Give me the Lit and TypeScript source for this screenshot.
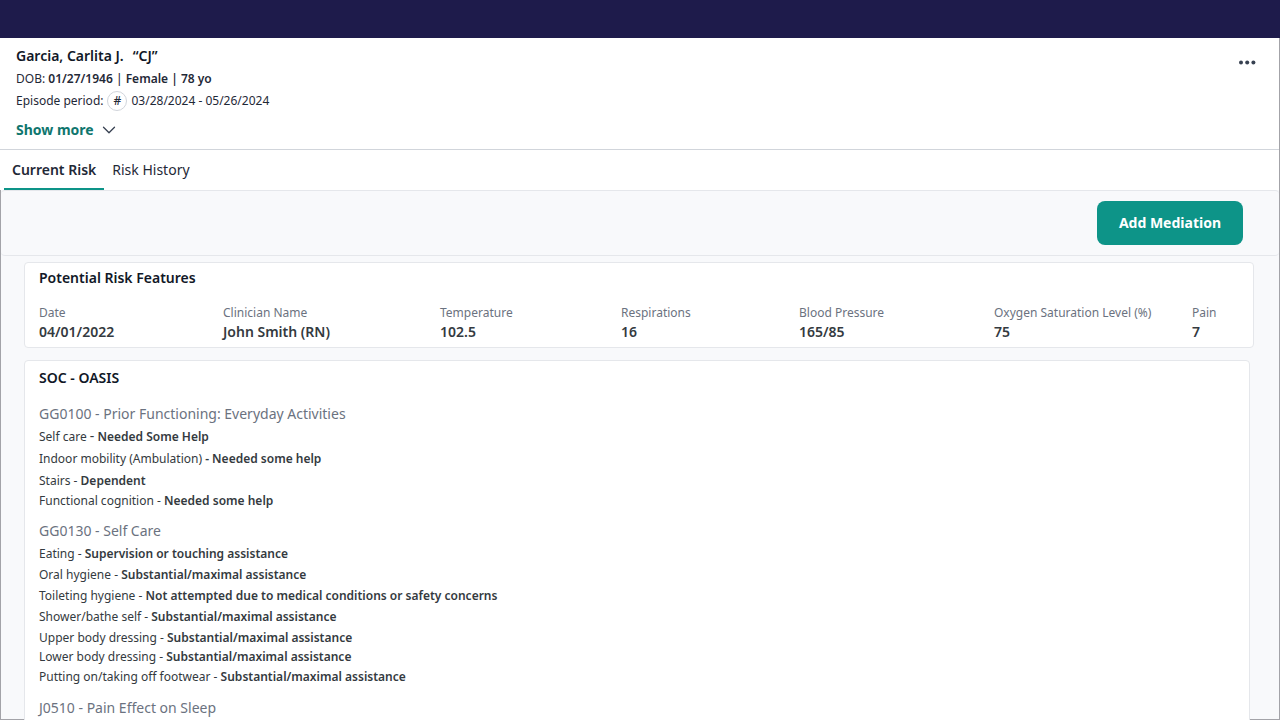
import { LitElement, html, css } from "lit";
import { customElement, state } from "lit/decorators.js";
import { classMap } from "lit/directives/class-map.js";

interface Answer {
  item: string;
  value: string;
  compact?: boolean;
  dash?: "medium" | "strong";
}

interface Section {
  title: string;
  roomy?: boolean;
  answers: Answer[];
}

const features = [
  { label: "Date", value: "04/01/2022" },
  { label: "Clinician Name", value: "John Smith (RN)" },
  { label: "Temperature", value: "102.5" },
  { label: "Respirations", value: "16" },
  { label: "Blood Pressure", value: "165/85" },
  { label: "Oxygen Saturation Level (%)", value: "75" },
  { label: "Pain", value: "7" },
];

const sections: Section[] = [
  {
    title: "GG0100 - Prior Functioning: Everyday Activities",
    roomy: true,
    answers: [
      { item: "Self care", value: "Needed Some Help", dash: "medium" },
      { item: "Indoor mobility (Ambulation)", value: "Needed some help", dash: "strong" },
      { item: "Stairs", value: "Dependent" },
      { item: "Functional cognition", value: "Needed some help", compact: true },
    ],
  },
  {
    title: "GG0130 - Self Care",
    answers: [
      { item: "Eating", value: "Supervision or touching assistance" },
      { item: "Oral hygiene", value: "Substantial/maximal assistance" },
      { item: "Toileting hygiene", value: "Not attempted due to medical conditions or safety concerns" },
      { item: "Shower/bathe self", value: "Substantial/maximal assistance" },
      { item: "Upper body dressing", value: "Substantial/maximal assistance" },
      { item: "Lower body dressing", value: "Substantial/maximal assistance", compact: true },
      { item: "Putting on/taking off footwear", value: "Substantial/maximal assistance" },
    ],
  },
  { title: "J0510 - Pain Effect on Sleep", answers: [] },
];

@customElement("patient-header")
export class PatientHeader extends LitElement {
  static styles = css`
    :host {
      display: flex;
      justify-content: space-between;
      align-items: flex-start;
      padding: 8px 15px 9px 16px;
      border-bottom: 1px solid #d1d5db;
      color: #1f2937;
      font-size: 12px;
      line-height: 22px;
    }
    .name {
      display: flex;
      gap: 9px;
      margin: 0 0 2px;
      font-size: 14px;
      line-height: 20px;
      font-weight: 600;
      color: #111827;
    }
    .line {
      display: flex;
      align-items: center;
      gap: 4px;
    }
    .strong {
      font-weight: 600;
    }
    .medium {
      font-weight: 500;
    }
    .badge {
      display: flex;
      align-items: center;
      justify-content: center;
      box-sizing: border-box;
      width: 20px;
      height: 20px;
      border: 1px solid #d1d5db;
      border-radius: 50%;
      font-weight: 500;
    }
    button {
      display: flex;
      align-items: center;
      padding: 0;
      border: 0;
      background: none;
      font: inherit;
      cursor: pointer;
    }
    .more {
      gap: 8px;
      margin-top: 8px;
      font-size: 14px;
      line-height: 20px;
      font-weight: 700;
      color: #0f766e;
    }
    .menu {
      padding: 8px;
    }
    svg {
      display: block;
    }
  `;

  render() {
    return html`
      <div>
        <h1 class="name"><span>Garcia, Carlita J.</span><span>“CJ”</span></h1>
        <div>DOB: <span class="strong">01/27/1946</span> <span class="medium">|</span> <span class="strong">Female | 78 yo</span></div>
        <div class="line">
          <span>Episode period:</span>
          <span class="badge">#</span>
          <span>03/28/2024 - 05/26/2024</span>
        </div>
        <button class="more" type="button">
          Show more
          <svg width="14" height="8" viewBox="0 0 14 8" fill="none" stroke="#374151" stroke-width="1.3" stroke-linecap="round" stroke-linejoin="round" aria-hidden="true">
            <path d="M1.5 1.3 7 6.7 12.5 1.3" />
          </svg>
        </button>
      </div>
      <button class="menu" type="button" aria-label="More actions">
        <svg width="18" height="16" viewBox="0 0 18 16" fill="#374151" aria-hidden="true">
          <circle cx="3" cy="8.5" r="2" />
          <circle cx="9.2" cy="8.5" r="2" />
          <circle cx="15.4" cy="8.5" r="2" />
        </svg>
      </button>
    `;
  }
}

@customElement("risk-features")
export class RiskFeatures extends LitElement {
  static styles = css`
    :host {
      display: block;
      padding: 5px 14px;
      border: 1px solid #e5e7eb;
      border-radius: 4px;
      background: #fff;
    }
    .title {
      margin: 0 0 16px;
      font-size: 14px;
      line-height: 20px;
      font-weight: 600;
      color: #111827;
    }
    .features {
      display: grid;
      grid-template-columns: 184fr 217fr 181fr 178fr 195fr 198fr 47fr;
      margin: 0;
    }
    .label {
      font-size: 12px;
      line-height: 18px;
      color: #6b7280;
    }
    .value {
      margin: 0;
      font-size: 14px;
      line-height: 20px;
      font-weight: 600;
      color: #343a40;
    }
  `;

  render() {
    return html`
      <h2 class="title">Potential Risk Features</h2>
      <dl class="features">
        ${features.map(
          (f) => html`<div><dt class="label">${f.label}</dt><dd class="value">${f.value}</dd></div>`
        )}
      </dl>
    `;
  }
}

@customElement("oasis-card")
export class OasisCard extends LitElement {
  static styles = css`
    :host {
      display: block;
      padding: 7px 14px;
      border: 1px solid #e5e7eb;
      border-radius: 4px;
      background: #fff;
    }
    .title {
      margin: 0 0 16px;
      font-size: 14px;
      line-height: 20px;
      font-weight: 600;
      color: #111827;
    }
    .section {
      margin-bottom: 11px;
    }
    .heading {
      margin: 0 0 2px;
      font-size: 14px;
      line-height: 20px;
      font-weight: 400;
      color: #6b7280;
    }
    .answers {
      margin: 0;
      padding: 0;
      list-style: none;
      font-size: 12px;
      line-height: 21px;
      color: #343a40;
    }
    .roomy {
      line-height: 22px;
    }
    .compact {
      line-height: 18px;
    }
    .medium {
      font-size: 14px;
      line-height: 20px;
    }
    .strong {
      font-weight: 600;
    }
  `;

  render() {
    return html`
      <h2 class="title">SOC - OASIS</h2>
      ${sections.map(
        (s) => html`
          <section class="section">
            <h3 class="heading">${s.title}</h3>
            <ul class=${classMap({ answers: true, roomy: !!s.roomy })}>
              ${s.answers.map(
                (a) => html`<li class=${classMap({ compact: !!a.compact })}>
                  ${a.item}
                  <span class=${a.dash ?? ""}>-</span>
                  <span class="strong">${a.value}</span>
                </li>`
              )}
            </ul>
          </section>
        `
      )}
    `;
  }
}

@customElement("app-root")
export class AppRoot extends LitElement {
  @state() private tab = "Current Risk";

  static styles = css`
    :host {
      display: flex;
      flex-direction: column;
      height: 100vh;
      overflow: hidden;
      background: #fff;
      font-family: "Noto Sans", sans-serif;
    }
    .topbar {
      flex: none;
      height: 38px;
      background: #1e1b4b;
    }
    .head {
      flex: none;
      border-right: 1px solid #a3a3a8;
    }
    .tabs {
      display: flex;
      padding: 0 4px;
    }
    .tab {
      padding: 10px 8px 8px;
      border: 0;
      border-bottom: 2px solid transparent;
      background: none;
      font: inherit;
      font-size: 14px;
      line-height: 20px;
      color: #1f2937;
      cursor: pointer;
    }
    .active {
      border-bottom-color: #0d9488;
      font-weight: 600;
    }
    .main {
      flex: 1;
      min-height: 0;
      border: 1px solid #a3a3a8;
      border-top: 0;
      background: #f8f9fb;
    }
    .toolbar {
      display: flex;
      justify-content: flex-end;
      padding: 10px 36px 10px 0;
      border: 1px solid #e5e7eb;
      border-width: 1px 0;
      border-radius: 4px;
    }
    .add {
      padding: 12px 22px;
      border: 0;
      border-radius: 8px;
      background: #0d9488;
      color: #fff;
      font: inherit;
      font-size: 14px;
      line-height: 20px;
      font-weight: 700;
      cursor: pointer;
    }
    .cards {
      display: flex;
      flex-direction: column;
      gap: 12px;
      padding: 6px 25px 0 23px;
    }
    .oasis {
      margin-right: 4px;
    }
  `;

  render() {
    return html`
      <div class="topbar"></div>
      <header class="head">
        <patient-header></patient-header>
        <nav class="tabs" role="tablist">
          ${["Current Risk", "Risk History"].map(
            (name) => html`<button
              type="button"
              role="tab"
              aria-selected=${this.tab === name}
              class=${classMap({ tab: true, active: this.tab === name })}
              @click=${() => (this.tab = name)}
            >${name}</button>`
          )}
        </nav>
      </header>
      <main class="main">
        <div class="toolbar"><button class="add" type="button">Add Mediation</button></div>
        <div class="cards">
          <risk-features></risk-features>
          <oasis-card class="oasis"></oasis-card>
        </div>
      </main>
    `;
  }
}
